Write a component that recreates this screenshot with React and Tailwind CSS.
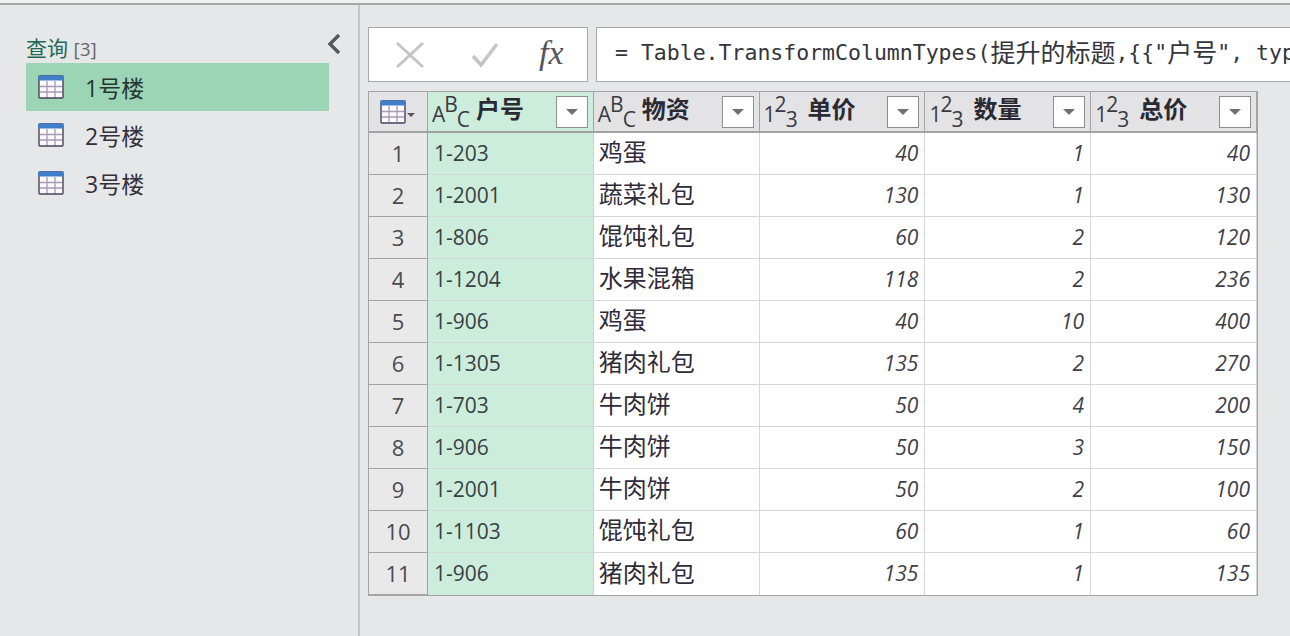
const F = { fontFamily: '"Open Sans","Noto Sans CJK SC",sans-serif' };
const rows = [
  ["1-203","鸡蛋",40,1,40],["1-2001","蔬菜礼包",130,1,130],["1-806","馄饨礼包",60,2,120],["1-1204","水果混箱",118,2,236],
  ["1-906","鸡蛋",40,10,400],["1-1305","猪肉礼包",135,2,270],["1-703","牛肉饼",50,4,200],["1-906","牛肉饼",50,3,150],
  ["1-2001","牛肉饼",50,2,100],["1-1103","馄饨礼包",60,1,60],["1-906","猪肉礼包",135,1,135],
];
function TableIcon() {
  return (
    <svg width="26" height="24" viewBox="0 0 26 24" className="shrink-0">
      <rect x="1" y="1" width="24" height="22" rx="1" fill="#fbfafc" stroke="#4a3f5c" strokeWidth="1.4" />
      <rect x="0.5" y="0.5" width="25" height="5" fill="#3f7fc9" />
      <path d="M9 6V22M17 6V22M2 11.5H24M2 17H24" stroke="#a99ab5" strokeWidth="1.3" fill="none" />
    </svg>
  );
}
function Query({ n, active }) {
  return (
    <div className={`h-12 flex items-center pl-[12px] gap-[21px] text-[23px] ${active ? "bg-[#9bd5b5] text-[#26352f]" : "text-[#33303c]"}`}>
      <TableIcon />
      <span className="leading-none pt-[3px]">{n}号楼</span>
    </div>
  );
}
function Drop() {
  return (
    <div className="w-[32px] h-[32px] bg-white border border-[#8e8e8e] flex items-center justify-center shrink-0">
      <div className="w-0 h-0 border-x-[6px] border-x-transparent border-t-[6px] border-t-[#707070]" />
    </div>
  );
}
function TypeMark({ a, b, c }) {
  return (
    <span className="flex items-start w-[38px] h-[34px] text-[#3a3a44] text-[21px] leading-none shrink-0 mb-[2px]">
      <span className="mt-[10px]">{a}</span>
      <span className="mt-[0px] -ml-[1px]">{b}</span>
      <span className="mt-[15px] -ml-[1px]">{c}</span>
    </span>
  );
}
function Head({ name, kind, active }) {
  return (
    <div className={`w-[166px] h-full flex items-center pl-[4px] pr-[5px] border-r border-[#a3a3a3] ${active ? "bg-[#cdeddc]" : "bg-[#e3e3e5]"}`}>
      {kind === "abc" ? <TypeMark a="A" b="B" c="C" /> : <TypeMark a="1" b="2" c="3" />}
      <span className="ml-[6px] text-[24px] font-bold text-[#2a2a33] flex-1 whitespace-nowrap leading-none mb-[5px]">{name}</span>
      <Drop />
    </div>
  );
}
function Num({ v }) {
  return <div className="w-[166px] h-full pr-[6px] flex items-center justify-end italic text-[21px] text-[#3e3e48] border-r border-[#d6d6da]">{v}</div>;
}
export default function App() {
  const cjk = "text-[25px]";
  return (
    <div className="w-[1290px] h-[636px] overflow-hidden bg-[#e6e7e8] flex flex-col" style={F}>
      <div className="h-[5px] bg-[#eff0f0] border-b-2 border-[#a6a6a6] shrink-0" />
      <div className="flex flex-1 min-h-0">
        <aside className="w-[360px] shrink-0 border-r-2 border-[#c4c5c7] pl-[26px] pr-[29px] relative">
          <div className="h-[58px] pt-[31px] text-[21px] leading-[24px] text-[#1f6a55] whitespace-nowrap">
            查询 <span className="text-[#66666e] text-[19px]">[3]</span>
          </div>
          <Query n={1} active />
          <Query n={2} />
          <Query n={3} />
          <svg className="absolute left-[325px] top-[27px]" width="18" height="24" viewBox="0 0 18 24">
            <path d="M14 3L5 12L14 21" fill="none" stroke="#55555c" strokeWidth="3.4" />
          </svg>
        </aside>
        <main className="flex-1 min-w-0 pl-[8px] pt-[22px]">
          <div className="flex h-[55px] gap-[8px]">
            <div className="w-[220px] h-full bg-white border border-[#a9a9a9] flex items-center shrink-0 relative">
              <svg className="absolute left-[26px] top-[13px]" width="30" height="28" viewBox="0 0 30 28"><path d="M2 2L28 26M28 2L2 26" stroke="#c4c4c4" strokeWidth="3" fill="none" /></svg>
              <svg className="absolute left-[102px] top-[14px]" width="28" height="26" viewBox="0 0 28 26"><path d="M2 14L10 23L26 2" stroke="#c4c4c4" strokeWidth="3.4" fill="none" /></svg>
              <span className="absolute left-[170px] top-[3px] text-[34px] italic text-[#55555c] leading-[44px]" style={{ fontFamily: '"Liberation Serif",serif' }}>fx</span>
            </div>
            <div className="flex-1 min-w-0 h-full bg-white border border-[#a9a9a9] border-r-0 flex items-center pl-[18px] pb-[2px] overflow-hidden text-[21.5px] text-[#35353d] whitespace-nowrap" style={{ fontFamily: '"DejaVu Sans Mono","Noto Sans CJK SC",monospace' }}>
              = Table.TransformColumnTypes(<span className={cjk}>提升的标题</span>,{"{{"}"<span className={cjk}>户号</span>", typ
            </div>
          </div>
          <div className="mt-[9px] w-[890px] border border-[#a3a3a3]">
            <div className="flex h-[41px] border-b-2 border-[#a3a3a3]">
              <div className="w-[59px] shrink-0 h-full bg-[#e3e3e5] border-r border-[#a3a3a3] flex items-center pl-[11px] gap-[1px]">
                <TableIcon />
                <div className="mt-[6px] w-0 h-0 border-x-[4px] border-x-transparent border-t-[4px] border-t-[#55555c]" />
              </div>
              <Head name="户号" kind="abc" active />
              <Head name="物资" kind="abc" />
              <Head name="单价" kind="123" />
              <Head name="数量" kind="123" />
              <Head name="总价" kind="123" />
            </div>
            {rows.map((r, i) => (
              <div key={i} className={`flex h-[42px] bg-white ${i < rows.length - 1 ? "border-b border-[#d6d6da]" : ""}`}>
                <div className="w-[59px] shrink-0 h-[42px] bg-[#e9e9ea] border-r border-b border-[#a3a3a3] flex items-center justify-center text-[22px] text-[#4a4a52]">{i + 1}</div>
                <div className="w-[166px] h-full bg-[#cdeddc] pl-[6px] flex items-center text-[21px] text-[#3a3f44] border-r border-[#c3d8cc]">{r[0]}</div>
                <div className="w-[166px] h-full pl-[5px] pb-[3px] flex items-center text-[24px] text-[#2f2b3a] border-r border-[#d6d6da]">{r[1]}</div>
                <Num v={r[2]} /><Num v={r[3]} /><Num v={r[4]} />
              </div>
            ))}
          </div>
        </main>
      </div>
    </div>
  );
}
